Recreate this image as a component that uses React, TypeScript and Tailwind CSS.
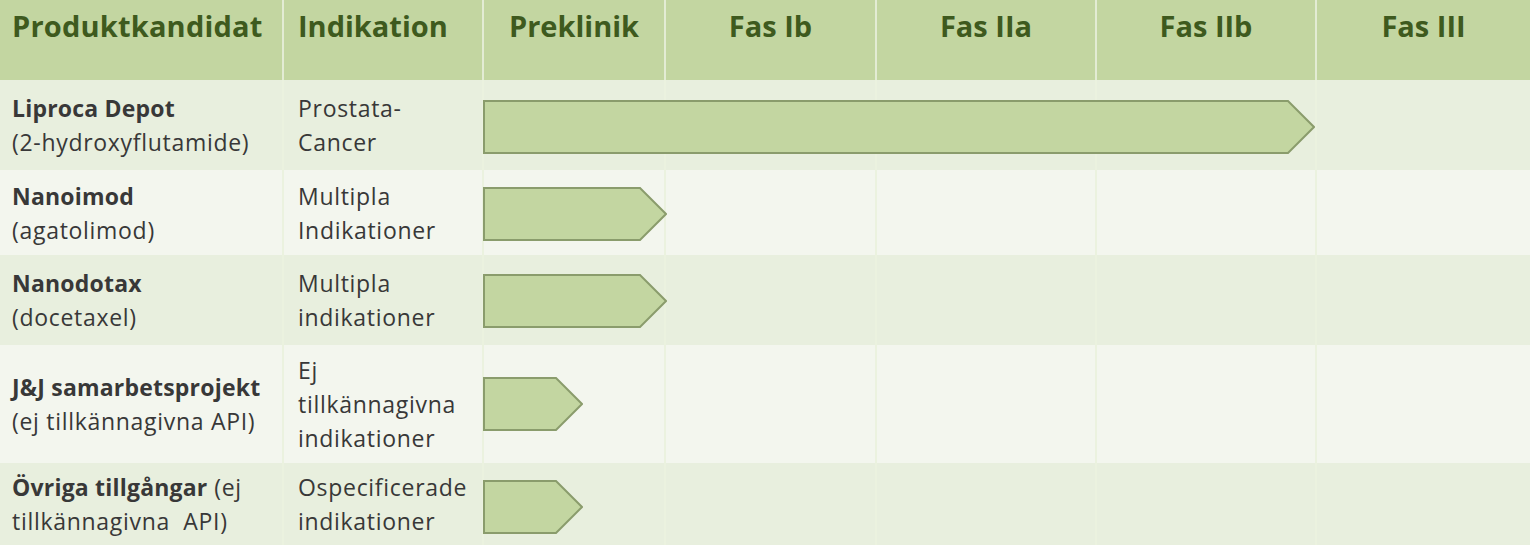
import React from "react";

const cols = "grid grid-cols-[282px_200px_182px_211px_220px_220px_1fr]";

type Row = {
  name: React.ReactNode;
  indication: string[];
  height: string;
  bg: string;
  arrow: number;
  arrowShift?: string;
};

const rows: Row[] = [
  {
    name: (
      <>
        <span className="block font-bold tracking-[0.2px]">Liproca Depot</span>
        <span className="block">(2-hydroxyflutamide)</span>
      </>
    ),
    indication: ["Prostata-", "Cancer"],
    height: "h-[90px]",
    bg: "bg-[#e8efde]",
    arrow: 831,
    arrowShift: "mt-[3px]",
  },
  {
    name: (
      <>
        <span className="block font-bold tracking-[0.2px]">Nanoimod</span>
        <span className="block">(agatolimod)</span>
      </>
    ),
    indication: ["Multipla", "Indikationer"],
    height: "h-[85px]",
    bg: "bg-[#f3f6ee]",
    arrow: 183,
    arrowShift: "mt-[2px]",
  },
  {
    name: (
      <>
        <span className="block font-bold tracking-[0.2px]">Nanodotax</span>
        <span className="block">(docetaxel)</span>
      </>
    ),
    indication: ["Multipla", "indikationer"],
    height: "h-[90px]",
    bg: "bg-[#e8efde]",
    arrow: 183,
    arrowShift: "mt-[2px]",
  },
  {
    name: (
      <>
        <span className="block font-bold tracking-[0.2px]">J&amp;J samarbetsprojekt</span>
        <span className="block">(ej tillkännagivna API)</span>
      </>
    ),
    indication: ["Ej", "tillkännagivna", "indikationer"],
    height: "h-[118px]",
    bg: "bg-[#f3f6ee]",
    arrow: 99,
  },
  {
    name: (
      <>
        <span className="block">
          <span className="font-bold tracking-[0.2px]">Övriga tillgångar</span> (ej
        </span>
        <span className="block whitespace-pre">tillkännagivna  API)</span>
      </>
    ),
    indication: ["Ospecificerade", "indikationer"],
    height: "h-[82px]",
    bg: "bg-[#e8efde]",
    arrow: 99,
    arrowShift: "mt-[5px]",
  },
];

const phases = ["Preklinik", "Fas Ib", "Fas IIa", "Fas IIb", "Fas III"];

const Arrow = ({ width }: { width: number }) => {
  const pts = `1,1 ${width - 26},1 ${width},27 ${width - 26},53 1,53`;
  return (
    <svg width={width + 1} height={54} className="block">
      <polygon points={pts} fill="#c3d6a1" stroke="#8a9c6c" strokeWidth="2" />
    </svg>
  );
};

const Pipeline = () => {
  return (
    <div className="w-[1530px] h-[545px] overflow-hidden bg-white font-['Open_Sans',sans-serif] text-[#383838]">
      {/* Header */}
      <div className={`${cols} h-[80px] bg-[#c3d6a1] text-[#3e5a1e] text-[29px] font-bold leading-[40px]`}>
        <div className="pl-3 pt-[6px] tracking-[0.2px]">Produktkandidat</div>
        <div className="pl-[14px] pt-[6px] border-l-2 border-[#e3ecd4]">Indikation</div>
        {phases.map((p) => (
          <div key={p} className="pt-[6px] text-center border-l-2 border-[#e3ecd4]">
            {p}
          </div>
        ))}
      </div>

      {/* Rows */}
      {rows.map((row, i) => (
        <div
          key={i}
          className={`${cols} ${row.height} ${row.bg} text-[23px] leading-[34px] tracking-[0.7px]`}
        >
          <div className="row-start-1 col-start-1 pl-3 flex flex-col justify-center">{row.name}</div>
          <div className="row-start-1 col-start-2 pl-[14px] flex flex-col justify-center border-l-2 border-[#ebf2df]">
            {row.indication.map((t) => (
              <span key={t} className="block">
                {t}
              </span>
            ))}
          </div>
          <div className="row-start-1 col-start-3 border-l-2 border-[#ebf2df]" />
          <div className="row-start-1 col-start-4 border-l-2 border-[#ebf2df]" />
          <div className="row-start-1 col-start-5 border-l-2 border-[#ebf2df]" />
          <div className="row-start-1 col-start-6 border-l-2 border-[#ebf2df]" />
          <div className="row-start-1 col-start-7 border-l-2 border-[#ebf2df]" />
          <div
            className={`row-start-1 col-start-3 col-end-8 self-center justify-self-start ml-px ${row.arrowShift ?? ""}`}
          >
            <Arrow width={row.arrow} />
          </div>
        </div>
      ))}
    </div>
  );
};

export default Pipeline;
